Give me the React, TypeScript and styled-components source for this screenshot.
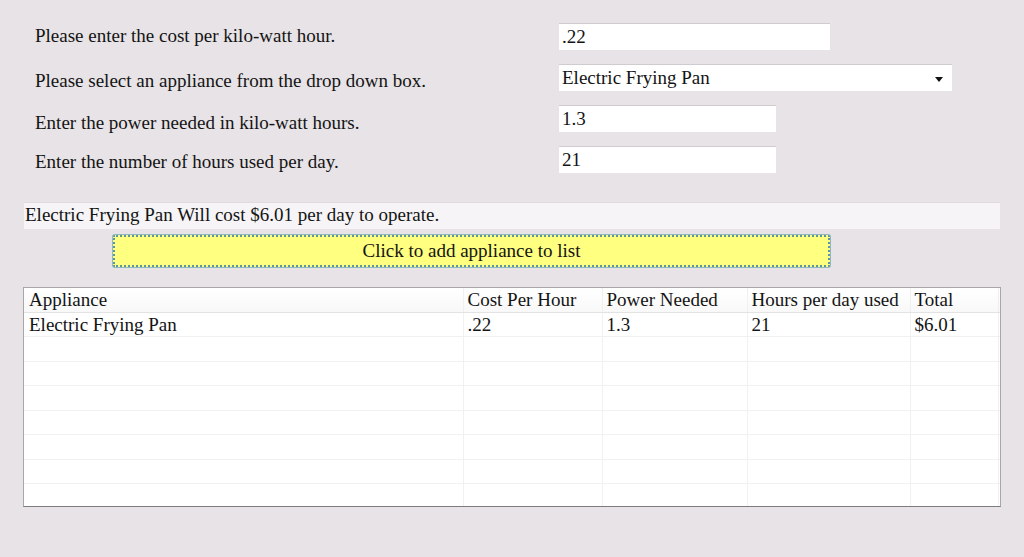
import styled, { createGlobalStyle } from 'styled-components';

const serif = `"Liberation Serif", "Times New Roman", serif`;

const GlobalStyle = createGlobalStyle`
  html, body {
    margin: 0;
    padding: 0;
    background: #e7e3e6;
  }
  body {
    font-family: ${serif};
    color: #141414;
  }
`;

const Page = styled.div`
  width: 1024px;
  height: 557px;
  box-sizing: border-box;
  padding: 23px 23px 0 23px;
  display: flex;
  flex-direction: column;
`;

const Form = styled.div`
  display: grid;
  grid-template-columns: 524px auto;
  grid-auto-rows: 27px;
  row-gap: 14px;
  padding-left: 12px;
`;

const Label = styled.div<{ $nudge?: number }>`
  font-size: 19px;
  line-height: 22px;
  align-self: start;
  white-space: nowrap;
  padding-top: ${(p) => p.$nudge ?? 2}px;
`;

const TextBox = styled.div<{ $width: number }>`
  width: ${(p) => p.$width}px;
  height: 27px;
  box-sizing: border-box;
  background: #fff;
  border-top: 1px solid #cfcbce;
  padding: 0 3px;
  font-size: 19px;
  line-height: 24px;
  display: flex;
  align-items: center;
  justify-content: space-between;
`;

const Arrow = styled.span`
  width: 0;
  height: 0;
  border-left: 4px solid transparent;
  border-right: 4px solid transparent;
  border-top: 5px solid #111;
  margin-right: 6px;
  margin-top: 2px;
`;

const ResultBar = styled.div`
  margin-top: 29px;
  margin-left: 1px;
  width: 976px;
  height: 27px;
  box-sizing: border-box;
  background: #f6f4f6;
  border-top: 1px solid #dedade;
  padding-left: 1px;
  font-size: 19px;
  line-height: 24px;
`;

const AddButton = styled.button`
  margin-top: 6px;
  margin-left: 90px;
  width: 717px;
  height: 32px;
  background: #ffff80;
  border: 2px dotted #5b97a2;
  box-shadow: 0 0 0 1px #8fb8c0;
  border-radius: 2px;
  font-family: ${serif};
  font-size: 19px;
  color: #141414;
  padding: 0;
  cursor: pointer;
`;

const TableFrame = styled.div`
  margin-top: 20px;
  width: 978px;
  height: 220px;
  box-sizing: border-box;
  background: #fff;
  border: 1px solid #a8a6a8;
  border-bottom-color: #7e7c7e;
  overflow: hidden;
`;

const Grid = styled.table`
  border-collapse: collapse;
  table-layout: fixed;
  width: 976px;
  font-size: 19px;
  line-height: 22px;
`;

const HeadCell = styled.th<{ $width: number }>`
  box-sizing: border-box;
  width: ${(p) => p.$width}px;
  height: 24px;
  padding: 0 0 0 4px;
  text-align: left;
  font-weight: normal;
  background: linear-gradient(#ffffff, #f8f8f8);
  border-bottom: 1px solid #e3e3e3;
  border-left: 1px solid #f0f0f0;
  white-space: nowrap;
  overflow: hidden;
  &:first-child {
    border-left: none;
    padding-left: 5px;
  }
`;

const Cell = styled.td`
  box-sizing: border-box;
  height: 24.5px;
  padding: 1px 0 0 4px;
  border-bottom: 1px solid #f1f1f1;
  border-left: 1px solid #f1f1f1;
  white-space: nowrap;
  overflow: hidden;
  &:first-child {
    border-left: none;
    padding-left: 5px;
  }
`;

const columns = [
  { title: 'Appliance', width: 439 },
  { title: 'Cost Per Hour', width: 139 },
  { title: 'Power Needed', width: 145 },
  { title: 'Hours per day used', width: 163 },
  { title: 'Total', width: 88 },
  { title: '', width: 2 },
];

const rows = [['Electric Frying Pan', '.22', '1.3', '21', '$6.01', '']];
while (rows.length < 8) rows.push(['', '', '', '', '', '']);

export default function App() {
  return (
    <>
      <GlobalStyle />
      <Page>
        <Form>
          <Label $nudge={2}>Please enter the cost per kilo-watt hour.</Label>
          <TextBox $width={271}>.22</TextBox>
          <Label $nudge={6}>Please select an appliance from the drop down box.</Label>
          <TextBox $width={393}>
            Electric Frying Pan
            <Arrow />
          </TextBox>
          <Label $nudge={7}>Enter the power needed in kilo-watt hours.</Label>
          <TextBox $width={217}>1.3</TextBox>
          <Label $nudge={5}>Enter the number of hours used per day.</Label>
          <TextBox $width={217}>21</TextBox>
        </Form>
        <ResultBar>Electric Frying Pan Will cost $6.01 per day to operate.</ResultBar>
        <AddButton>Click to add appliance to list</AddButton>
        <TableFrame>
          <Grid>
            <thead>
              <tr>
                {columns.map((c, i) => (
                  <HeadCell key={i} $width={c.width}>
                    {c.title}
                  </HeadCell>
                ))}
              </tr>
            </thead>
            <tbody>
              {rows.map((r, i) => (
                <tr key={i}>
                  {r.map((v, j) => (
                    <Cell key={j}>{v}</Cell>
                  ))}
                </tr>
              ))}
            </tbody>
          </Grid>
        </TableFrame>
      </Page>
    </>
  );
}
